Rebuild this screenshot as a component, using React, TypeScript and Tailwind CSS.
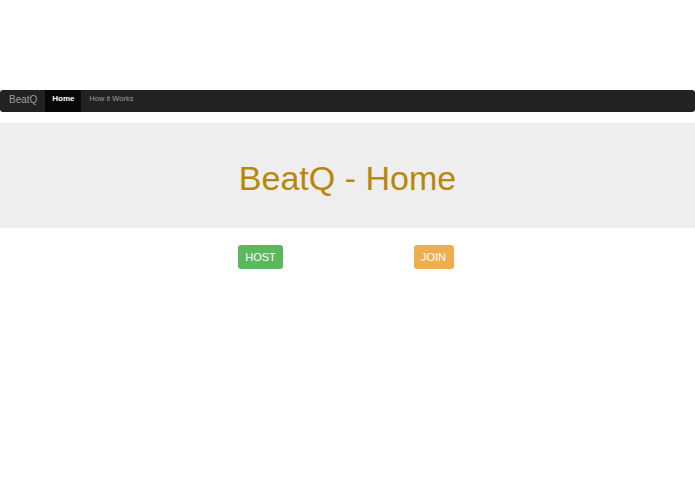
export default function App() {
  return (
    <div className="min-h-[494px] bg-white font-['Liberation_Sans',Arial,sans-serif]">
      <div className="h-[90px]" />
      <nav className="flex h-[22px] items-stretch rounded-[3px] bg-[#222222]">
        <a className="flex items-center pb-[4px] pl-[9px] pr-[8px] text-[10px] text-[#9d9d9d]">BeatQ</a>
        <a className="flex w-[36px] items-center justify-center pb-[4px] bg-[#080808] text-[8px] font-bold text-white">Home</a>
        <a className="flex items-center pb-[4px] px-[8px] text-[7.5px] text-[#9d9d9d]">How it Works</a>
      </nav>
      <div className="mt-[11px] flex h-[105px] items-center justify-center bg-[#eeeeee]">
        <h1 className="pt-[4px] text-[34px] leading-none text-[#b8860b]">BeatQ - Home</h1>
      </div>
      <div className="mt-[17px] flex justify-center pr-[2px]">
        <div className="flex w-[174px] justify-center">
          <button className="h-[24px] w-[45px] rounded-[3px] bg-[#5cb85c] text-[11px] text-white">HOST</button>
        </div>
        <div className="flex w-[172px] justify-center">
          <button className="h-[24px] w-[40px] rounded-[3px] bg-[#f0ad4e] text-[11px] text-white">JOIN</button>
        </div>
      </div>
    </div>
  );
}
